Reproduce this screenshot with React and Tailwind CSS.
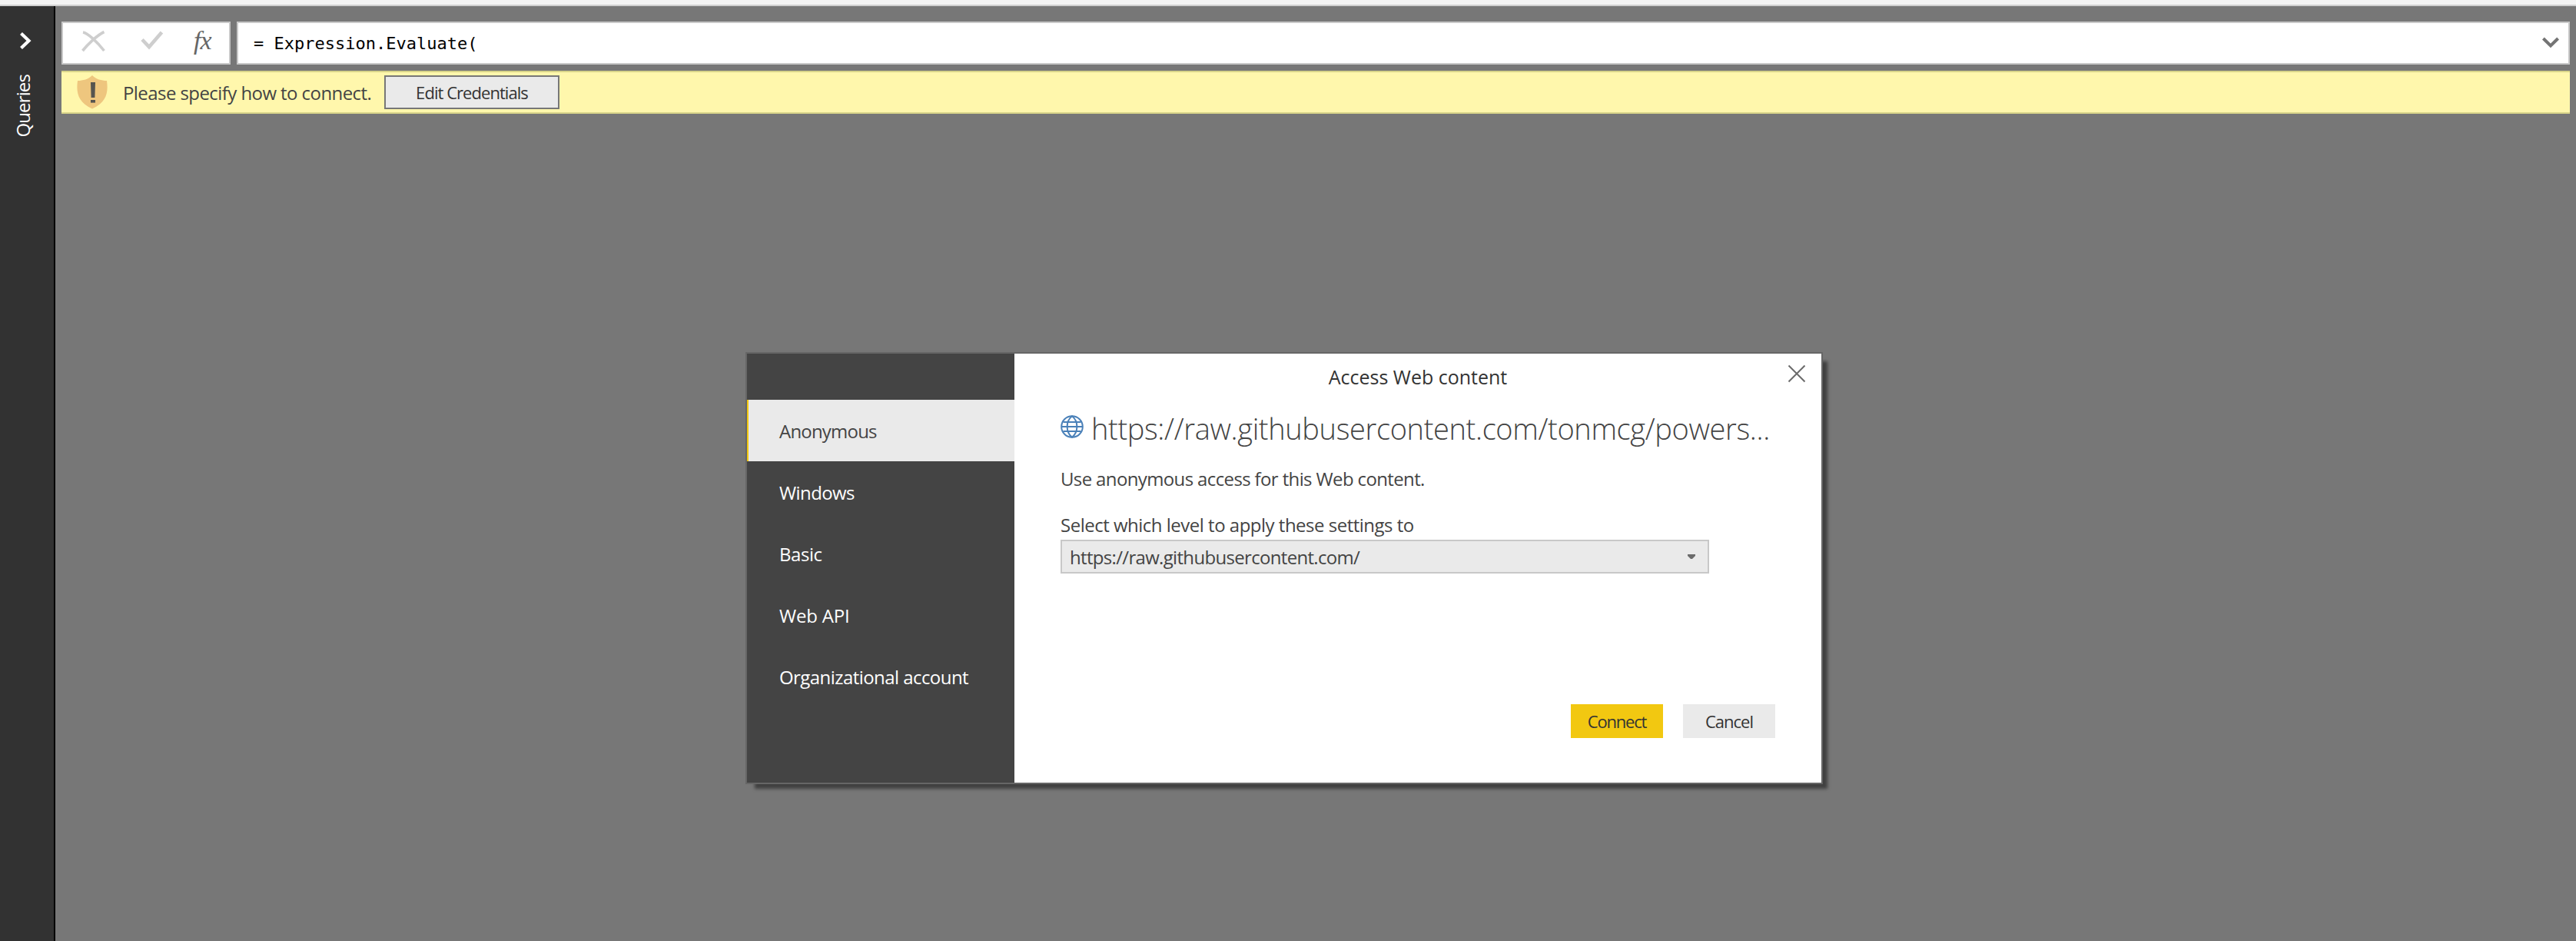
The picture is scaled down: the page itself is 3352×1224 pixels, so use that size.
const methods = [
  { label: 'Anonymous', spacing: 'tracking-[-0.8px]', active: true },
  { label: 'Windows', spacing: 'tracking-[-0.6px]' },
  { label: 'Basic', spacing: 'tracking-[-0.45px]' },
  { label: 'Web API', spacing: 'tracking-[-0.2px]' },
  { label: 'Organizational account', spacing: 'tracking-[-0.56px]' },
];

function QueriesRail() {
  return (
    <aside className="flex w-[72px] shrink-0 flex-col border-r-2 border-black bg-[#323232] text-white">
      <svg className="mt-[34px] ml-[26px] h-[22px] w-[16px]" viewBox="0 0 16 22" fill="none" stroke="currentColor" strokeWidth="4.2">
        <path d="M1.5 1.5 L11.5 11 L1.5 20.5" />
      </svg>
      <span className="mt-[33px] ml-[14px] rotate-180 self-start text-[24px] leading-8 tracking-[-0.87px] whitespace-nowrap [writing-mode:vertical-rl]">
        Queries
      </span>
    </aside>
  );
}

function FormulaBar() {
  return (
    <div className="flex h-[56px] gap-2">
      <div className="flex w-[220px] shrink-0 items-start border-2 border-[#c8c8c8] bg-white">
        <svg className="mt-[9px] ml-[24px] h-[30px] w-[32px]" viewBox="0 0 32 30" fill="none" stroke="#cecece">
          <path d="M2 3 C8 4 20 15 29.5 27" strokeWidth="3.6" />
          <path d="M1.5 27 C8 19 20 7 29.5 2.5" strokeWidth="3.6" />
        </svg>
        <svg className="mt-[9px] ml-[45px] h-[28px] w-[30px]" viewBox="0 0 30 28" fill="none" stroke="#cecece" strokeWidth="4.6">
          <path d="M2 12.5 L11 22 L27.5 3" />
        </svg>
        <span className="ml-[39px] font-['Liberation_Serif'] text-[34px] leading-[46px] tracking-[-1px] text-[#666] italic">
          fx
        </span>
      </div>
      <div className="flex flex-1 items-center justify-between border-2 border-[#c8c8c8] bg-white pr-[12px] pl-[20px]">
        <span className="font-['DejaVu_Sans_Mono'] text-[22px] whitespace-pre text-black">= Expression.Evaluate(</span>
        <svg className="h-[16px] w-[22px]" viewBox="0 0 22 16" fill="none" stroke="#747474" strokeWidth="4">
          <path d="M1.4 2 L11 11.4 L20.6 2" />
        </svg>
      </div>
    </div>
  );
}

function CredentialsBanner() {
  return (
    <div className="flex h-[56px] items-center border-y-2 border-[#d8d48a] bg-[#fff7ac]">
      <svg className="ml-[20px] h-[44px] w-[40px]" viewBox="0 0 40 44">
        <path d="M20 0 C15 5 8 7 1 7 C-1 22 1 35 20 43.5 C39 35 41 22 39 7 C32 7 25 5 20 0 Z" fill="#eec67e" />
        <path d="M18 9 H24 L23.4 29 H18.6 Z" fill="#56544f" />
        <rect x="18" y="32" width="6" height="3.6" fill="#56544f" />
      </svg>
      <span className="ml-[20px] w-[340px] pt-[2px] text-[24px] leading-9 tracking-[-0.57px] whitespace-nowrap text-[#444]">
        Please specify how to connect.
      </span>
      <button className="h-[44px] w-[228px] border-2 border-[#777] bg-[#eaeaea] text-[22px] leading-[38px] tracking-[-0.95px] text-[#333]">
        Edit Credentials
      </button>
    </div>
  );
}

function Globe() {
  return (
    <svg className="mt-[8px] h-[30px] w-[30px] shrink-0" viewBox="0 0 30 30" fill="none" stroke="#4a80b8" strokeWidth="2">
      <circle cx="15" cy="15" r="13.8" />
      <path d="M1 15 H29 M3.5 9 H26.5 M3.5 21 H26.5" />
      <path d="M15 1.2 C6.5 8 6.5 22 15 28.8 C23.5 22 23.5 8 15 1.2 Z" />
    </svg>
  );
}

function AccessDialog() {
  return (
    <div
      role="dialog"
      className="absolute top-[458px] left-[970px] flex h-[562px] w-[1402px] border-2 border-[#666] bg-white shadow-[9px_9px_4px_-3px_#404040]"
    >
      <nav className="w-[348px] shrink-0 bg-[#444] pt-[60px]">
        {methods.map((m) => (
          <div
            key={m.label}
            className={
              m.active
                ? 'h-[80px] border-l-2 border-[#f2c811] bg-[#eaeaea] pl-[40px] text-[24px] leading-[82px] text-[#444]'
                : 'h-[80px] pl-[42px] text-[24px] leading-[82px] text-white'
            }
          >
            <span className={m.spacing}>{m.label}</span>
          </div>
        ))}
      </nav>
      <section className="flex flex-1 flex-col pl-[60px] text-[24px] text-[#444]">
        <header className="relative -ml-[60px] h-[72px] text-center text-[25px] leading-[61px] text-[#333]">
          Access Web content
          <svg className="absolute top-[14px] right-[20px] h-[24px] w-[24px]" viewBox="0 0 24 24" stroke="#6b6b6b" strokeWidth="2">
            <path d="M1.5 1.5 L22.5 22.5 M22.5 1.5 L1.5 22.5" />
          </svg>
        </header>
        <div className="flex h-[50px] gap-[10px]">
          <Globe />
          <h1 className="text-[38px] leading-[51px] font-light tracking-[-0.36px] whitespace-nowrap">
            https://raw.githubusercontent.com/tonmcg/powers...
          </h1>
        </div>
        <p className="mt-[25px] leading-8 tracking-[-0.63px]">Use anonymous access for this Web content.</p>
        <label className="mt-[28px] leading-8 tracking-[-0.5px]">Select which level to apply these settings to</label>
        <div className="mt-[3px] flex h-[44px] w-[844px] items-center justify-between border-2 border-[#c8c8c8] bg-[#eaeaea] pr-[16px] pl-[10px]">
          <span className="pt-[2px] leading-10 tracking-[-0.68px]">https://raw.githubusercontent.com/</span>
          <svg className="h-[6px] w-[10px]" viewBox="0 0 10 6" fill="#6b6b6b">
            <path d="M0 0 H10 V2 L6 6 H4 L0 2 Z" />
          </svg>
        </div>
        <footer className="mt-auto mr-[60px] mb-[58px] flex justify-end gap-[26px] text-[22px] leading-[44px] text-[#333]">
          <button className="h-[44px] w-[120px] bg-[#f2c811] tracking-[-1.2px]">Connect</button>
          <button className="h-[44px] w-[120px] bg-[#eaeaea] tracking-[-1px]">Cancel</button>
        </footer>
      </section>
    </div>
  );
}

export default function App() {
  return (
    <div className="relative flex h-[1224px] w-[3352px] flex-col overflow-hidden bg-[#777] font-['Open_Sans',sans-serif]">
      <div className="h-[8px] shrink-0 border-b-2 border-[#d0d0d0] bg-[#f3f3f3]" />
      <div className="flex min-h-0 flex-1">
        <QueriesRail />
        <main className="flex flex-1 flex-col gap-2 pt-[20px] pr-[8px] pl-[8px]">
          <FormulaBar />
          <CredentialsBanner />
        </main>
      </div>
      <AccessDialog />
    </div>
  );
}
